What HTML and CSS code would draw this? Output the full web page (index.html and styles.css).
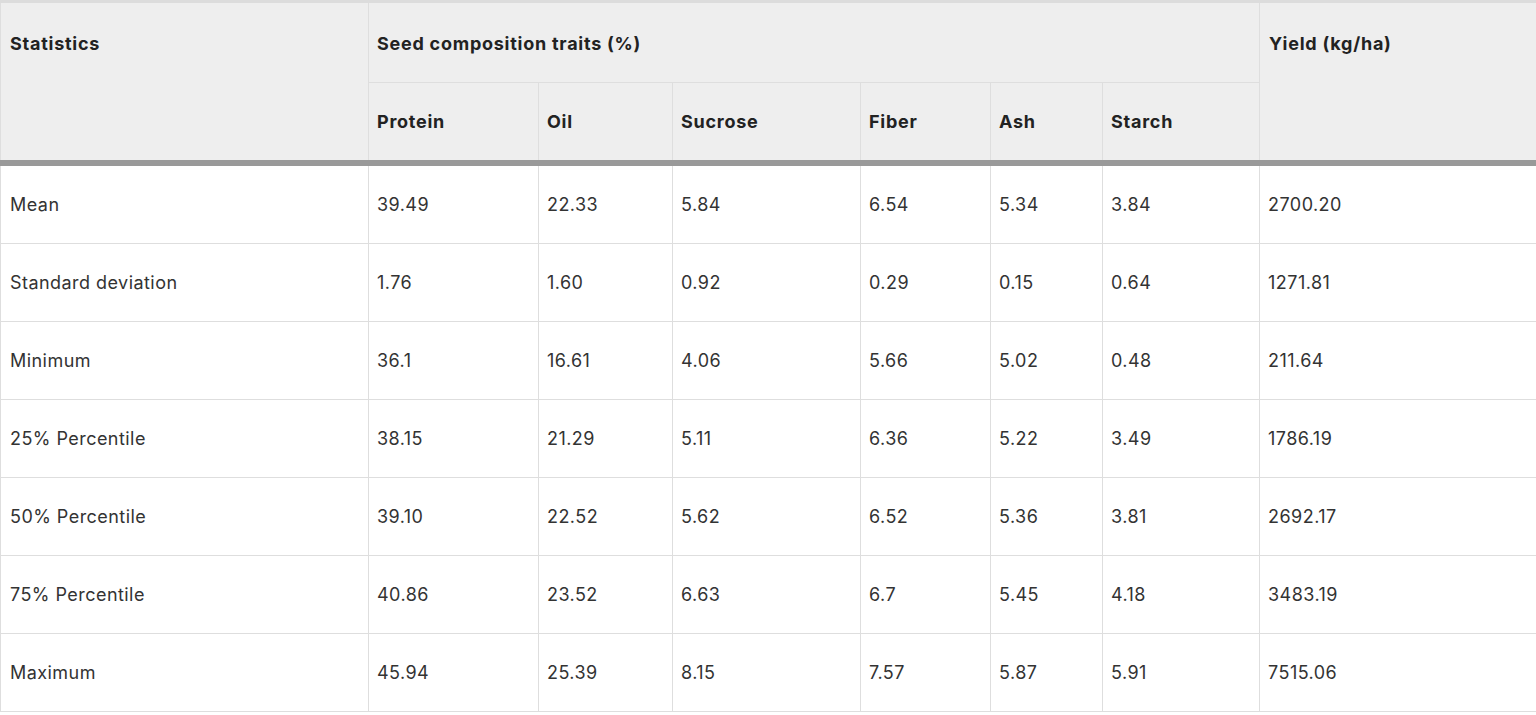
FILE: index.html
```html
<!DOCTYPE html>
<html lang="en">
<head>
<meta charset="utf-8">
<title>Seed composition statistics</title>
<link rel="stylesheet" href="styles.css">
</head>
<body>
<table class="stats">
  <colgroup>
    <col class="c-stat">
    <col class="c-protein">
    <col class="c-oil">
    <col class="c-sucrose">
    <col class="c-fiber">
    <col class="c-ash">
    <col class="c-starch">
    <col class="c-yield">
  </colgroup>
  <thead>
    <tr class="top">
      <th rowspan="2" class="span2">Statistics</th>
      <th colspan="6">Seed composition traits (%)</th>
      <th rowspan="2" class="span2">Yield (kg/ha)</th>
    </tr>
    <tr class="sub">
      <th>Protein</th>
      <th>Oil</th>
      <th>Sucrose</th>
      <th>Fiber</th>
      <th>Ash</th>
      <th>Starch</th>
    </tr>
  </thead>
  <tbody>
    <tr><td>Mean</td><td>39.49</td><td>22.33</td><td>5.84</td><td>6.54</td><td>5.34</td><td>3.84</td><td>2700.20</td></tr>
    <tr><td>Standard deviation</td><td>1.76</td><td>1.60</td><td>0.92</td><td>0.29</td><td>0.15</td><td>0.64</td><td>1271.81</td></tr>
    <tr><td>Minimum</td><td>36.1</td><td>16.61</td><td>4.06</td><td>5.66</td><td>5.02</td><td>0.48</td><td>211.64</td></tr>
    <tr><td>25% Percentile</td><td>38.15</td><td>21.29</td><td>5.11</td><td>6.36</td><td>5.22</td><td>3.49</td><td>1786.19</td></tr>
    <tr><td>50% Percentile</td><td>39.10</td><td>22.52</td><td>5.62</td><td>6.52</td><td>5.36</td><td>3.81</td><td>2692.17</td></tr>
    <tr><td>75% Percentile</td><td>40.86</td><td>23.52</td><td>6.63</td><td>6.7</td><td>5.45</td><td>4.18</td><td>3483.19</td></tr>
    <tr><td>Maximum</td><td>45.94</td><td>25.39</td><td>8.15</td><td>7.57</td><td>5.87</td><td>5.91</td><td>7515.06</td></tr>
  </tbody>
</table>
</body>
</html>
```

FILE: styles.css
```css
html, body {
  margin: 0;
  padding: 0;
  background: #ffffff;
}

body {
  font-family: Inter, "Liberation Sans", Arial, sans-serif;
  font-size: 18px;
  color: #333333;
}

.stats {
  width: 1536px;
  table-layout: fixed;
  border-collapse: collapse;
  border-top: 3px solid #dcdcdc;
}

.c-stat { width: 368px; }
.c-protein { width: 170px; }
.c-oil { width: 134px; }
.c-sucrose { width: 188px; }
.c-fiber { width: 130px; }
.c-ash { width: 112px; }
.c-starch { width: 157px; }
.c-yield { width: 277px; }

.stats th,
.stats td {
  border: 1px solid #dedede;
  padding: 28px 9px 28px 8px;
  line-height: 21px;
  text-align: left;
  vertical-align: top;
}

.stats th {
  background: #eeeeee;
  color: #222222;
  font-weight: 700;
  letter-spacing: 0.75px;
}

.stats thead tr.top th {
  padding-top: 30px;
}

.stats thead tr.top th.span2 {
  padding-left: 9px;
}

.stats thead tr.sub th,
.stats thead th.span2 {
  border-bottom: 6px solid #999999;
}

.stats td {
  color: #333333;
  font-weight: 400;
  letter-spacing: 0.45px;
}

.stats td:first-child {
  padding-left: 9px;
}
```
